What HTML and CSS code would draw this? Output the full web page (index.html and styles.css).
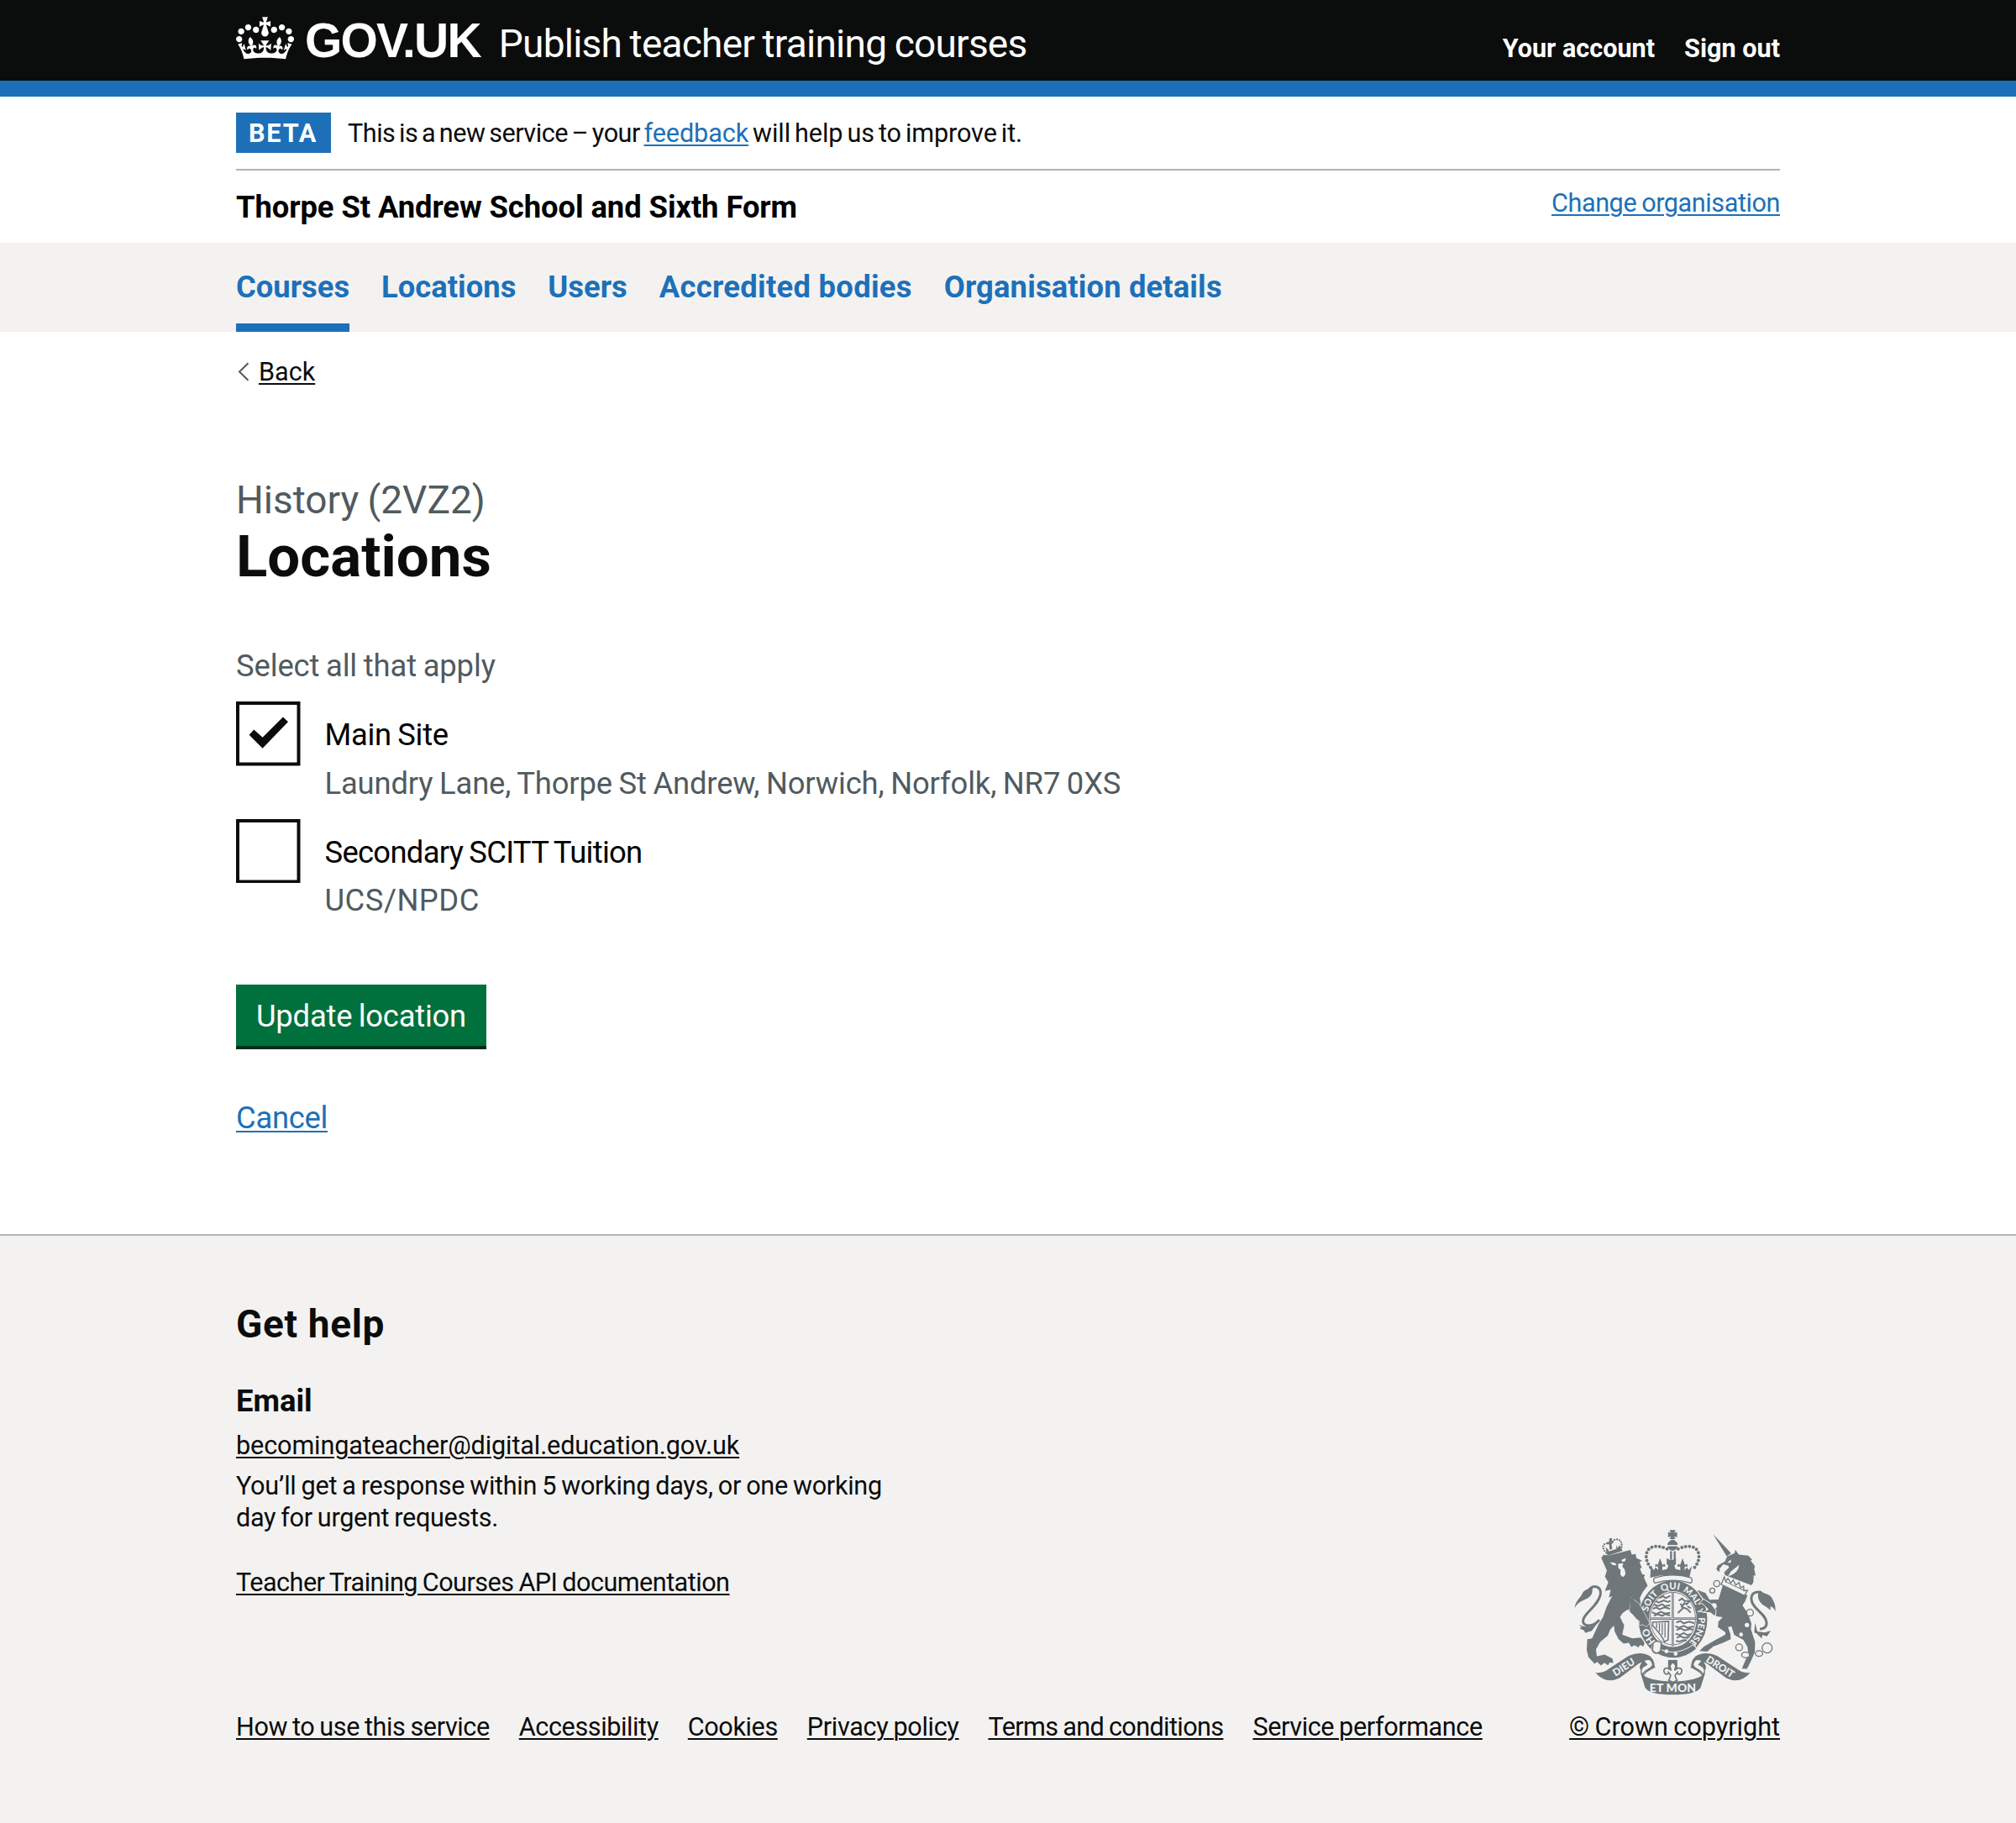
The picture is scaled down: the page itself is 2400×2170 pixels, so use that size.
FILE: index.html
```html
<!DOCTYPE html>
<html lang="en">
<head>
<meta charset="utf-8">
<title>Locations - Publish teacher training courses</title>
<link rel="stylesheet" href="styles.css">
</head>
<body>
<header class="header">
  <div class="container header-row">
    <svg class="crown" viewBox="0 0 132 97" aria-hidden="true"><path fill="#fff" d="M25 30.2c3.5 1.5 7.7-.2 9.1-3.7 1.5-3.6-.2-7.8-3.9-9.2-3.6-1.4-7.6.3-9.1 3.9-1.4 3.5.3 7.5 3.9 9zM9 39.5c3.6 1.5 7.8-.2 9.2-3.7 1.5-3.6-.2-7.8-3.9-9.1-3.6-1.5-7.6.2-9.1 3.8-1.4 3.5.3 7.5 3.8 9zM4.4 57.2c3.5 1.5 7.7-.2 9.1-3.8 1.5-3.6-.2-7.7-3.9-9.1-3.5-1.5-7.6.3-9.1 3.8-1.4 3.5.3 7.6 3.9 9.1zm38.3-21.4c3.5 1.5 7.7-.2 9.1-3.8 1.5-3.6-.2-7.7-3.9-9.1-3.6-1.5-7.6.3-9.1 3.8-1.3 3.6.4 7.7 3.9 9.1zm64.4-5.6c-3.6 1.5-7.8-.2-9.1-3.7-1.5-3.6.2-7.8 3.8-9.2 3.6-1.4 7.7.3 9.2 3.9 1.3 3.5-.4 7.5-3.9 9zm15.9 9.3c-3.6 1.5-7.7-.2-9.1-3.7-1.5-3.6.2-7.8 3.7-9.1 3.6-1.5 7.7.2 9.2 3.8 1.5 3.5-.3 7.5-3.8 9zm4.7 17.7c-3.6 1.5-7.8-.2-9.2-3.8-1.5-3.6.2-7.7 3.9-9.1 3.6-1.5 7.7.3 9.2 3.8 1.3 3.5-.4 7.6-3.9 9.1zM89.3 35.8c-3.6 1.5-7.8-.2-9.2-3.8-1.4-3.6.2-7.7 3.9-9.1 3.6-1.5 7.7.3 9.2 3.8 1.4 3.6-.3 7.7-3.9 9.1zM69.7 17.7l8.9 4.7V9.3l-8.9 2.8c-.2-.3-.5-.6-.9-.9L72.4 0H59.6l3.5 11.2c-.3.3-.6.5-.9.9l-8.8-2.8v13.1l8.8-4.7c.3.3.6.7.9.9l-5 15.4v.1c-.2.8-.4 1.6-.4 2.4 0 4.1 3.1 7.5 7 8.1h.2c.3 0 .7.1 1 .1.4 0 .7 0 1-.1h.2c4-.6 7.1-4.1 7.1-8.1 0-.8-.1-1.7-.4-2.4V34l-5.1-15.4c.4-.2.7-.6 1-.9zM66 92.8c16.9 0 32.8 1.1 47.1 3.2 4-16.9 8.9-26.7 14-33.5l-9.6-3.4c1 4.9 1.1 7.2 0 10.2-1.5-1.4-3-4.3-4.2-8.7L108.6 76c2.8-2 5-3.2 7.5-3.3-4.4 9.4-10 11.9-13.6 11.2-4.3-.8-6.3-4.6-5.6-7.9 1-4.7 5.7-5.9 8-.5 4.3-8.7-3-11.4-7.6-8.8 7.1-7.2 7.9-13.5 2.1-21.1-8 6.1-8.1 12.3-4.5 20.8-4.7-5.4-12.1-2.5-9.5 6.2 3.4-5.2 7.9-2 7.2 3.1-.6 4.3-6.4 7.8-13.5 7.2-10.3-.9-10.9-8-11.2-13.8 2.5-.5 7.1 1.8 11 7.3L80.2 60c-4.1 4.4-8 5.3-12.3 5.4 1.4-4.4 8-11.6 8-11.6H55.5s6.4 7.2 7.9 11.6c-4.2-.1-8-1-12.3-5.4l1.4 16.4c3.9-5.5 8.5-7.7 10.9-7.3-.3 5.8-.9 12.8-11.1 13.8-7.2.6-12.9-2.9-13.5-7.2-.7-5 3.8-8.3 7.1-3.1 2.7-8.7-4.6-11.6-9.4-6.2 3.7-8.5 3.6-14.7-4.6-20.8-5.8 7.6-5 13.9 2.2 21.1-4.7-2.6-11.9.1-7.7 8.8 2.3-5.5 7.1-4.2 8.1.5.7 3.3-1.3 7.1-5.7 7.9-3.5.7-9-1.8-13.5-11.2 2.5.1 4.7 1.3 7.5 3.3l-4.7-15.4c-1.2 4.4-2.7 7.2-4.3 8.7-1.1-3-.9-5.3 0-10.2l-9.5 3.4c5 6.9 9.9 16.7 14 33.5 14.8-2.1 30.8-3.2 47.7-3.2z"/></svg>
    <span class="wordmark">GOV.UK</span>
    <span class="service-name">Publish teacher training courses</span>
    <nav class="account-links"><a href="#">Your account</a><a href="#">Sign out</a></nav>
  </div>
</header>

<div class="container phase-banner">
  <strong class="tag">BETA</strong>
  <span class="phase-text"><span class="phase-lead">This is a new service – your </span><a class="link" href="#">feedback</a> will help us to improve it.</span>
</div>

<div class="container organisation">
  <strong class="organisation-name">Thorpe St Andrew School and Sixth Form</strong>
  <a class="link organisation-change" href="#">Change organisation</a>
</div>

<nav class="primary-nav">
  <div class="container nav-list">
    <a class="nav-item nav-current" href="#">Courses</a>
    <a class="nav-item" href="#">Locations</a>
    <a class="nav-item" href="#">Users</a>
    <a class="nav-item nav-accredited" href="#">Accredited bodies</a>
    <a class="nav-item nav-details" href="#">Organisation details</a>
  </div>
</nav>

<main class="container main">
  <div class="back">
    <svg class="chevron" viewBox="0 0 27 38" aria-hidden="true"><path d="M14.5 8.2 4 18.500 14.5 28.800" fill="none" stroke="#505a5f" stroke-width="2"/></svg>
    <a class="link link-dark" href="#">Back</a>
  </div>
  <span class="caption">History (2VZ2)</span>
  <h1 class="heading">Locations</h1>
  <p class="hint select-hint">Select all that apply</p>
  <div class="checkbox-item">
    <svg class="checkbox" viewBox="0 0 77 77" aria-hidden="true"><rect x="2" y="2" width="73" height="73" fill="#fff" stroke="#0b0c0c" stroke-width="4"/><path d="M15.700 40 21.400 33.600 31.800 43 56.300 18.600 62.400 24.500 31.800 56z" fill="#0b0c0c"/></svg>
    <div class="checkbox-text">
      <div class="label label-main">Main Site</div>
      <div class="hint hint-address">Laundry Lane, Thorpe St Andrew, Norwich, Norfolk, NR7 0XS</div>
    </div>
  </div>
  <div class="checkbox-item">
    <svg class="checkbox" viewBox="0 0 77 77" aria-hidden="true"><rect x="2" y="2" width="73" height="73" fill="#fff" stroke="#0b0c0c" stroke-width="4"/></svg>
    <div class="checkbox-text">
      <div class="label label-secondary">Secondary SCITT Tuition</div>
      <div class="hint hint-ucs">UCS/NPDC</div>
    </div>
  </div>
  <button class="button" type="button">Update location</button>
  <p class="cancel"><a class="link" href="#">Cancel</a></p>
</main>

<footer class="footer">
  <div class="container footer-row">
    <div class="footer-main">
      <h2 class="help-title">Get help</h2>
      <h3 class="email-title">Email</h3>
      <p class="email"><a class="link link-dark" href="#">becomingateacher@digital.education.gov.uk</a></p>
      <p class="response"><span class="response-first">You’ll get a response within 5 working days, or one working</span><br>day for urgent requests.</p>
      <p class="docs"><a class="link link-dark" href="#">Teacher Training Courses API documentation</a></p>
      <nav class="footer-links">
        <a class="link link-dark f-how" href="#">How to use this service</a>
        <a class="link link-dark f-access" href="#">Accessibility</a>
        <a class="link link-dark f-cookies" href="#">Cookies</a>
        <a class="link link-dark f-privacy" href="#">Privacy policy</a>
        <a class="link link-dark f-terms" href="#">Terms and conditions</a>
        <a class="link link-dark f-perf" href="#">Service performance</a>
      </nav>
    </div>
    <div class="copyright">
      <svg class="crest" viewBox="100 60 724 594" aria-hidden="true">
        <defs>
          <path id="garter" d="M394 464A92 107 0 1 1 499 475"/>
        </defs>
        <g fill="#6f777b" stroke="none">
          <!-- lion -->
          <path d="M197 163l8-11 20 2 76-19 5 16 14-2 2 14 21 10-9 5 8 21-7 2 8 20 11 4-5 7 14 31-4 4-14 19-10 20 2 14 18 28 5 26 8 21-10 13-13-7-15 4 4-16-15-11 8-13-22-5 6-11-22 0-16 12-9 13 15 30-7 33 36 14 30-3 14 17-4 15-12-6-6 9-14-7-12 6-8-15-19 3-18-16-14-27-3-22-13 14-9 22-27 23-15 26 3 25 28-6 28 14 3 16-13-2-6 10-13-9-12 10-14-13-9 7-22-24-6-26 2-38 17-3 22-48 17-28 13-37 20-39-12 6 7-28-21 4 12-31-12-20 7-22z"/>
          <path d="M102 342c4-27 20-34 28-53 7-14 27-15 37-22-4 14 2 23-13 36-16 13-37 12-52 39z"/>
          <path d="M150 280c20-24 48-16 44 14-7 34-38 52-56 78-11 18-8 31 14 33 18 1 28-8 38-20" fill="none" stroke="#6f777b" stroke-width="9"/>
          <path d="M117 403l18 5 25 1 26-17-23 32-23 7-5-9-16-7 8-4z"/>
          <!-- lion's crown -->
          <path d="M214 143l54-17 5 12-52 17z"/>
          <path d="M215 145C190 120 210 104 232 114C236 90 278 88 269 130" fill="none" stroke="#6f777b" stroke-width="7" stroke-linecap="round" stroke-dasharray="0 9"/>
          <path d="M226 93l10 0-2 10 6-2 1 9-8-1 3 22-9 3-2-22-7 3-1-8 8-1zM213 125l9 8 5 15-10 3zM250 117l5 10 9-10 3 16-15 7z"/>
          <!-- unicorn -->
          <path d="M597 78L661 146L646 158z"/>
          <path d="M610 201l3-11 26-14 8-18 27-12 2-12 13 17 34 4 14 15-6 2 15 20-2 12 5 23-7-2-1 25-7 11-94-36-4-10 18-18-3-6-18-5-14 18 3 8-9-2-6-12z"/>
          <path d="M632 259l88 38-8 20-10 16 20 30 12 35-2 20 15 46-1 36-14 33-14 27-18-1 10-24 13-29-3-24-15-26-33-18-9-30-13 2 9 26 1 18-28 13-35 13-21 18-28-2 16-16 39-22 37-20 1-9-27-19 2-19 15-16-22-3-15-28-15-8-14 8 9 17-9 13-11-20-15-2-4-12 18-13 17-7-18-24-10 11-18-15 20-13 26 10 14 24 32-1z"/>
          <path d="M802 350c-15-14-33-18-40-34-7-15-6-24 3-36 12 13 38 12 44 30 7 14 11 19 11 44-4-9-9-15-18-18z"/>
          <path d="M770 287c-27-8-42 8-34 34 9 28 49 42 52 73 2 16-11 24-24 23" fill="none" stroke="#6f777b" stroke-width="9"/>
          <path d="M747 395l8 31 27 4 21-7-13 20-17-4-2 13-19-19-8-3z"/>
          <!-- ribbon -->
          <path d="M176 573Q203 577 225 559L295 513Q340 494 374 516L390 555L352 570Q322 563 343 536L331 541L262 593Q213 616 176 573z"/>
          <path d="M730 573Q703 577 681 559L611 513Q566 494 532 516L516 555L554 570Q584 563 563 536L575 541L644 593Q693 616 730 573z"/>
          <path d="M337 573Q363 604 453 604Q543 604 569 573L552 627Q535 652 453 652Q371 652 354 627z"/>
          <path d="M436 528h33v30h-33z"/>
          <path d="M453 533l11 16-5 17c10-13 27-11 26 3-3 12-15 14-16 3l-8 10 2 9 5 10-15 7-15-7 5-10 2-9-8-10c-1 11-13 9-16-3-1-14 16-16 26-3l-5-17z" fill="#f3f2f1" stroke="#6f777b" stroke-width="5"/>
        </g>
        <!-- ribbon folds -->
        <path d="M351 525q27-16 34 17c4 25-31 16-39 46M555 525q-27-16-34 17c-4 25 31 16 39 46" fill="none" stroke="#6f777b" stroke-width="4"/>
        <path d="M350 530q25-13 31 15c-3 16-32 17-37 36-12-21 2-29 18-37M556 530q-25-13-31 15c3 16 32 17 37 36 12-21-2-29-18-37" fill="#f3f2f1" stroke="#6f777b" stroke-width="4"/>
        <!-- unicorn's chain and coronet -->
        <g fill="#f3f2f1" stroke="#6f777b" stroke-width="4">
          <circle cx="610" cy="255" r="11"/><circle cx="594" cy="280" r="9"/><circle cx="600" cy="335" r="12"/><circle cx="729" cy="359" r="12"/><circle cx="718" cy="403" r="10"/><circle cx="697" cy="437" r="9"/><circle cx="690" cy="483" r="12"/><ellipse cx="713" cy="510" rx="14" ry="10"/><ellipse cx="761" cy="505" rx="13" ry="10"/><circle cx="790" cy="485" r="18"/>
          <path d="M637 231l5 17 8-12 10 17 9-11 9 18 12-9 5 19 11-6 1 16 13-1-11 19-83-40z"/>
        </g>
        <path d="M648 178l14-9-3 12zM690 188q-1 29-40 41l10-17z" fill="#f3f2f1"/>
        <path d="M641 248l72 34" stroke="#6f777b" stroke-width="3"/>
        <!-- lion's face -->
        <path d="M229 178l18 3 4 8q-14 3-22-11zM270 170l15-7-3 12-11 2zM257 184l19-2-4 12 8 9 4 16q-9 23-19 2l1-15-8-7z" fill="#f3f2f1"/>
        <!-- garter -->
        <ellipse cx="453" cy="382" rx="126" ry="142" fill="#f3f2f1"/>
        <ellipse cx="453" cy="382" rx="104" ry="119" fill="none" stroke="#6f777b" stroke-width="38"/>
        <ellipse cx="453" cy="380" rx="81" ry="94" fill="#f3f2f1" stroke="#6f777b" stroke-width="3"/>
        <path d="M452 287v192M370 380h168" stroke="#6f777b" stroke-width="8"/>
        <path d="M451 287v192M370 379h168" stroke="#f3f2f1" stroke-width="2"/>
        <g fill="none" stroke="#6f777b" stroke-width="6">
          <path d="M404 307l14-7 9 7 17-8M391 317l11 6 18-8 16 6 8-5M385 330l15 5 15-6 10 7 18-4M382 345l12-5 11 7 18-7 20 5M379 357l14 7 17-8 15 6 18-3M385 370l13-5 17 5 10-6 18 5"/>
          <path d="M465 394l15-5 12 8 20-6 18 6M462 407l12 6 18-7 14 7 20-5M466 421l15-6 14 7 20-5 10 3M463 434l14 5 15-7 13 7 15-4M467 449l12-6 16 6 18-5M464 460l14 2 14-5 10 2"/>
          <path d="M474 316l12-8 9 9 18 0-11 12-8-4-9 13 19 8 13 13M480 326l10 16-19 18M505 336l12 7"/>
        </g>
        <path d="M381 393l57-3-2 66-13 7q-7-20-42-58z" fill="#f3f2f1" stroke="#6f777b" stroke-width="5"/>
        <path d="M395 396v19M405 396v31M415 395v43M425 394v54" stroke="#6f777b" stroke-width="4"/>
        <path d="M380 472q69 56 150-1l7 18q-77 63-160 5z" fill="#6f777b" stroke="#f3f2f1" stroke-width="3"/>
        <path d="M382 468q16-15 30 0l-3 28q-18 17-29-3z" fill="#f3f2f1" stroke="#6f777b" stroke-width="5"/>
        <circle cx="430" cy="497" r="7" fill="#f3f2f1"/><circle cx="463" cy="506" r="7" fill="#f3f2f1"/>
        <!-- paws over the garter -->
        <path d="M305 305l28 22 25 45 12 24-11 14-14-8-14 3 3-15-13-10-24-30z" fill="#6f777b" stroke="#f3f2f1" stroke-width="2"/>
        <path d="M300 305l12 2 12 70-24-20z" fill="#6f777b"/>
        <path d="M563 310l28 18 17 24-4 20-17-13-24-1 16-11-21-21-14 2z" fill="#6f777b" stroke="#f3f2f1" stroke-width="3"/>
        <g class="motto">
          <text font-size="35"><textPath href="#garter" startOffset="4">HO</textPath></text>
          <text font-size="33"><textPath href="#garter" startOffset="116">SOIT</textPath></text>
          <text font-size="34"><textPath href="#garter" startOffset="206">QUI</textPath></text>
          <text font-size="32"><textPath href="#garter" startOffset="282">MAL</textPath></text>
          <text font-size="28"><textPath href="#garter" startOffset="367">Y</textPath></text>
          <text font-size="32"><textPath href="#garter" startOffset="397">PENSE</textPath></text>
          <text font-size="36" text-anchor="middle" transform="translate(284 564) rotate(-33)">DIEU</text>
          <text font-size="36" text-anchor="middle" transform="translate(616 563) rotate(33)">DROIT</text>
          <text x="453" y="641" font-size="42" text-anchor="middle" textLength="166">ET MON</text>
        </g>
        <!-- royal crown -->
        <g fill="#6f777b">
          <path d="M441 63h22l-5 11 10-4v20l-10-4 4 10h-20l4-10-10 4v-20l10 4zM434 112q18-28 36 0v5h-36zM434 121h36q-5 16-18 16t-18-16zM443 139h7v30h-7zM456 139h7v30h-7z"/>
          <path d="M374 192l11 15 6-10 10 10-2-14-10 2 2-11 8 4 8-24 9 24 8-4 2 11-10-2-1 14 17-4 5-12-6-5v-22l11 6 11 0 11-6v22l-6 5 5 12 17 4-1-14-10 2 2-11 8 4 9-24 8 24 8-4 2 11-10-2-2 14 10-10 6 10 11-15-9 42q-72-20-140 0z"/>
        </g>
        <path d="M373 197C342 160 356 96 437 133M531 197C562 160 548 96 467 133" fill="none" stroke="#6f777b" stroke-width="12" stroke-linecap="round" stroke-dasharray="0 14"/>
        <path d="M388 234q65-19 130 0 9 11-1 19-64-20-128 0-10-9-1-19z" fill="#f3f2f1" stroke="#6f777b" stroke-width="4"/>
      </svg>
      <a class="link link-dark f-crown" href="#">© Crown copyright</a>
    </div>
  </div>
</footer>
</body>
</html>
```
FILE: styles.css
```css
* { box-sizing: border-box; }

body {
  margin: 0;
  min-height: 2170px;
  display: flex;
  flex-direction: column;
  background: #fff;
  color: #0b0c0c;
  font-family: Roboto, "Liberation Sans", sans-serif;
  font-size: 30.6px;
  line-height: 38.3px;
  word-spacing: -0.04em;
}

h1, h2, h3, p { margin: 0; }

.container { width: 1838px; margin-left: 281px; }

.link {
  color: #1d70b8;
  text-decoration: underline;
  text-decoration-thickness: 2px;
  text-underline-offset: 3px;
}
.link-dark { color: #0b0c0c; }

/* Header */
.header { background: #0b0c0c; border-bottom: 19px solid #1d70b8; color: #fff; }
.header-row { display: flex; align-items: baseline; height: 96px; padding-top: 19px; white-space: nowrap; }
.crown { width: 69px; height: 51px; margin-top: 1px; align-self: flex-start; }
.wordmark {
  margin-left: 13px;
  font: 700 57px/58px "Liberation Sans", sans-serif;
  letter-spacing: -1.8px;
}
.service-name { margin-left: 22px; font-size: 46px; line-height: 46px; letter-spacing: -0.76px; }
.account-links { display: flex; gap: 35px; margin-left: auto; font-weight: 700; word-spacing: 0; }
.account-links a { color: #fff; text-decoration: none; }

/* Phase banner */
.phase-banner { display: flex; gap: 20px; padding: 19px 0; border-bottom: 2px solid #b1b4b6; line-height: 50px; }
.tag { width: 113px; height: 48px; padding-left: 15px; background: #1d70b8; color: #fff; font-weight: 700; letter-spacing: 1.8px; }
.phase-text { height: 48px; letter-spacing: -0.1px; word-spacing: -0.08em; }
.phase-lead { letter-spacing: -0.48px; }

/* Organisation */
.organisation { display: flex; justify-content: space-between; align-items: flex-start; padding: 20px 0 18px; }
.organisation-name { color: #000; font-size: 36.4px; line-height: 48px; letter-spacing: -0.08px; word-spacing: 0; }
.organisation-change { line-height: 37px; letter-spacing: -0.42px; }

/* Primary navigation */
.primary-nav { background: #f3f2f1; }
.nav-list { display: flex; gap: 38px; }
.nav-item {
  padding: 28.6px 0 19.4px;
  border-bottom: 10px solid transparent;
  color: #1d70b8;
  font-size: 36.4px;
  font-weight: 700;
  line-height: 48px;
  text-decoration: none;
  word-spacing: 0;
}
.nav-current { border-color: #1d70b8; }
.nav-accredited { letter-spacing: 0.29px; }
.nav-details { letter-spacing: 0.13px; }

/* Main content */
.main { display: flex; flex-direction: column; align-items: flex-start; font-size: 36.4px; line-height: 48px; }
.back { display: flex; margin-top: 29.5px; font-size: 30.6px; line-height: 38px; }
.chevron { width: 27px; height: 38px; }
.caption { margin-top: 104px; color: #505a5f; font-size: 46px; line-height: 58px; }
.heading { margin-top: 1px; font-size: 69px; line-height: 76px; }
.hint { color: #505a5f; }
.select-hint { margin: 68px 0 17.700px; letter-spacing: -0.12px; }
.checkbox-item { display: flex; margin-bottom: 19px; }
.checkbox { width: 76.500px; height: 76.500px; }
.checkbox-text { height: 120.600px; padding: 16px 0 0 29px; }
.label { color: #000; margin-bottom: 9.500px; }
.label-main { letter-spacing: -0.3px; }
.label-secondary { letter-spacing: -0.7px; }
.hint-address { letter-spacing: -0.15px; }
.hint-ucs { letter-spacing: 0.5px; }
.button {
  width: 298px;
  height: 73px;
  margin: 57.500px 0 0;
  padding: 4px 0 0;
  border: 0;
  background: #00703c;
  box-shadow: 0 4px 0 #002d18;
  color: #fff;
  font: inherit;
  letter-spacing: -0.21px;
  word-spacing: -0.04em;
}
.cancel { margin: 62px 0 114px; letter-spacing: -0.3px; }

/* Footer */
.footer { flex: 1; border-top: 2px solid #b1b4b6; background: #f3f2f1; }
.footer-row { display: flex; justify-content: space-between; align-items: flex-end; padding-top: 81.300px; white-space: nowrap; }
.help-title { font-size: 46px; line-height: 48px; letter-spacing: 0.65px; word-spacing: 0; }
.email-title { margin: 43.800px 0 9.800px; font-size: 36.4px; line-height: 48px; }
.email { letter-spacing: -0.12px; }
.response { margin: 9.700px 0 38.400px; letter-spacing: -0.31px; }
.response-first { letter-spacing: -0.28px; }
.docs { letter-spacing: -0.52px; }
.footer-links { display: flex; gap: 35px; margin-top: 134px; }
.f-how { letter-spacing: -0.4px; }
.f-access, .f-cookies { letter-spacing: -0.4px; }
.f-privacy { letter-spacing: -0.32px; }
.f-terms { letter-spacing: -0.61px; }
.f-perf { letter-spacing: -0.4px; }
.f-crown { letter-spacing: 0; }
.copyright { display: flex; flex-direction: column; align-items: flex-end; }
.crest { width: 241px; height: 198px; margin: 0 4px 19.500px 0; }
.motto { fill: #f3f2f1; font-family: Lato, sans-serif; font-weight: 900; word-spacing: 0; }
```
